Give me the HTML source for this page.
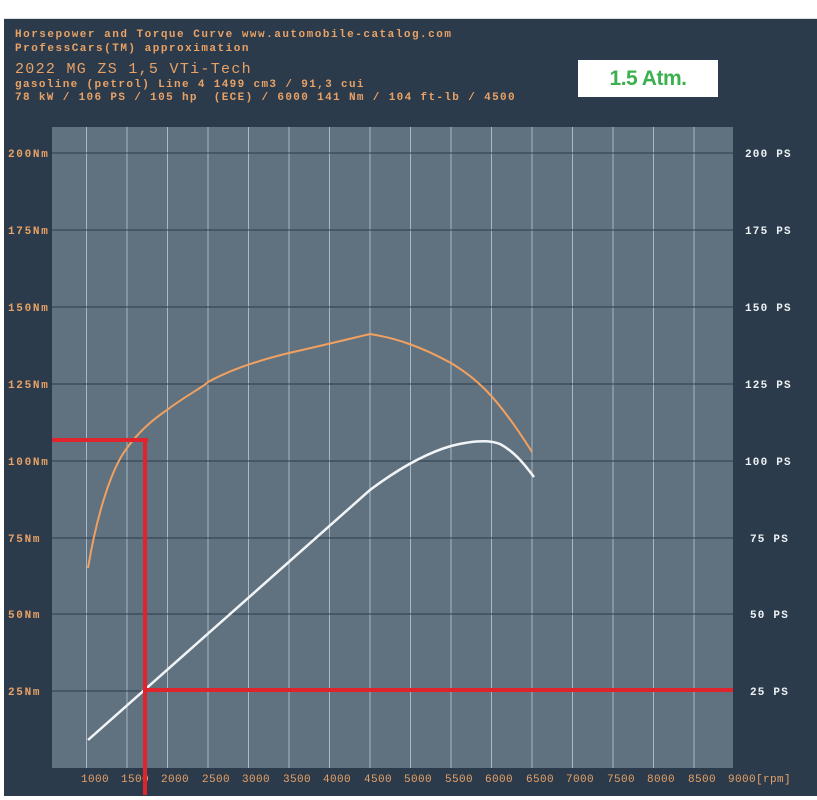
<!DOCTYPE html>
<html><head><style>
body{margin:0;width:817px;height:800px;background:#fff;overflow:hidden;position:relative;font-family:"Liberation Mono",monospace;}
#p{position:absolute;left:4px;top:18px;width:813px;height:777px;background:#2b3b4b;border-top:1px solid #ddd;}
.t{position:absolute;color:#e9a266;font-size:11px;font-weight:bold;white-space:pre;letter-spacing:1.5px;}
#box{position:absolute;left:578px;top:60px;width:140px;height:37px;background:#fff;color:#3bb04f;font:bold 21px "Liberation Sans",sans-serif;text-align:center;line-height:37px;letter-spacing:-0.5px;}
svg{position:absolute;left:0;top:0}
</style></head><body>
<div id="p"></div>
<div class="t" style="left:15px;top:29px">Horsepower and Torque Curve www.automobile-catalog.com</div>
<div class="t" style="left:15px;top:43px">ProfessCars(TM) approximation</div>
<div class="t" style="left:15px;top:61px;font-size:15px;font-weight:normal;letter-spacing:1.3px">2022 MG ZS 1,5 VTi-Tech</div>
<div class="t" style="left:15px;top:79px;letter-spacing:1.35px">gasoline (petrol) Line 4 1499 cm3 / 91,3 cui</div>
<div class="t" style="left:15px;top:92px;letter-spacing:1.35px">78 kW / 106 PS / 105 hp  (ECE) / 6000 141 Nm / 104 ft-lb / 4500</div>
<div id="box">1.5 Atm.</div>
<svg width="817" height="800" font-family="Liberation Mono,monospace" font-size="11" font-weight="bold">
<rect x="52" y="127" width="681" height="641" fill="#60717f"/>
<g stroke="#a9b9c6" stroke-width="1">
<line x1="86.5" y1="127" x2="86.5" y2="768"/><line x1="127" y1="127" x2="127" y2="768"/><line x1="167.5" y1="127" x2="167.5" y2="768"/><line x1="208" y1="127" x2="208" y2="768"/><line x1="248.5" y1="127" x2="248.5" y2="768"/><line x1="289" y1="127" x2="289" y2="768"/><line x1="329.5" y1="127" x2="329.5" y2="768"/><line x1="370" y1="127" x2="370" y2="768"/><line x1="410.5" y1="127" x2="410.5" y2="768"/><line x1="451" y1="127" x2="451" y2="768"/><line x1="491.5" y1="127" x2="491.5" y2="768"/><line x1="532" y1="127" x2="532" y2="768"/><line x1="572.5" y1="127" x2="572.5" y2="768"/><line x1="613" y1="127" x2="613" y2="768"/><line x1="653.5" y1="127" x2="653.5" y2="768"/><line x1="694" y1="127" x2="694" y2="768"/>
</g>
<g stroke="#2b3b4b" stroke-width="1">
<line x1="52" y1="153" x2="733" y2="153"/><line x1="52" y1="230" x2="733" y2="230"/><line x1="52" y1="307" x2="733" y2="307"/><line x1="52" y1="384" x2="733" y2="384"/><line x1="52" y1="461" x2="733" y2="461"/><line x1="52" y1="538" x2="733" y2="538"/><line x1="52" y1="614" x2="733" y2="614"/><line x1="52" y1="691" x2="733" y2="691"/>
</g>
<g fill="#e9a266" letter-spacing="1.7">
<text x="8" y="157">200Nm</text><text x="8" y="234">175Nm</text><text x="8" y="311">150Nm</text><text x="8" y="388">125Nm</text><text x="8" y="465">100Nm</text><text x="8" y="542">75Nm</text><text x="8" y="618">50Nm</text><text x="8" y="695">25Nm</text>
</g>
<text y="782" fill="#e9a266" font-weight="normal" letter-spacing="0.4"><tspan x="81">1000</tspan><tspan x="121">1500</tspan><tspan x="161">2000</tspan><tspan x="202">2500</tspan><tspan x="242">3000</tspan><tspan x="283">3500</tspan><tspan x="323">4000</tspan><tspan x="364">4500</tspan><tspan x="404">5000</tspan><tspan x="445">5500</tspan><tspan x="485">6000</tspan><tspan x="526">6500</tspan><tspan x="566">7000</tspan><tspan x="607">7500</tspan><tspan x="647">8000</tspan><tspan x="688">8500</tspan><tspan x="728">9000[rpm]</tspan></text>
<g fill="#eef2f5" letter-spacing="1.2">
<text x="745" y="157">200 PS</text><text x="745" y="234">175 PS</text><text x="745" y="311">150 PS</text><text x="745" y="388">125 PS</text><text x="745" y="465">100 PS</text><text x="750" y="542">75 PS</text><text x="750" y="618">50 PS</text><text x="750" y="695">25 PS</text>
</g>
<path d="M88,568 C96,520 110,470 127,448 C140,430 155,418 167,410 C185,396 205,386 208,382 C230,370 260,360 289,353 C320,346 345,340 370,334 C395,338 420,346 451,363 C475,378 495,393 532,452" fill="none" stroke="#f0a060" stroke-width="2"/>
<path d="M88,740 L370,490 C390,475 420,455 451,446 C475,440 490,440 500,444 C515,452 525,465 534,477" fill="none" stroke="#f2f5f7" stroke-width="2.5"/>
<g fill="#e0242e">
<rect x="52" y="438" width="96" height="4"/>
<rect x="143" y="438" width="4" height="357"/>
<rect x="143" y="688" width="590" height="4"/>
</g>
</svg>
</body></html>
